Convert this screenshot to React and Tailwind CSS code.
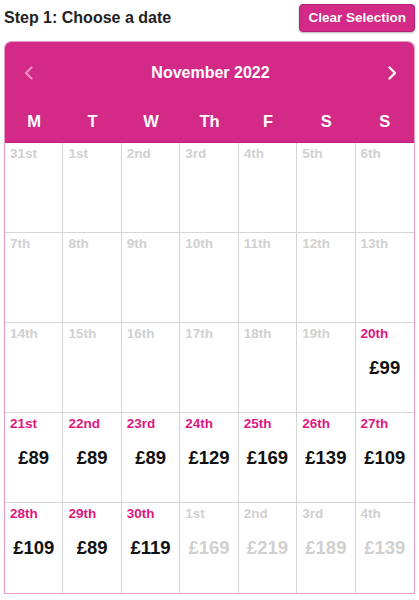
import React from 'react';

const days = ['M', 'T', 'W', 'Th', 'F', 'S', 'S'];

// each cell: label, price, active
const cells = [
  ['31st'], ['1st'], ['2nd'], ['3rd'], ['4th'], ['5th'], ['6th'],
  ['7th'], ['8th'], ['9th'], ['10th'], ['11th'], ['12th'], ['13th'],
  ['14th'], ['15th'], ['16th'], ['17th'], ['18th'], ['19th'], ['20th', '£99', true],
  ['21st', '£89', true], ['22nd', '£89', true], ['23rd', '£89', true], ['24th', '£129', true],
  ['25th', '£169', true], ['26th', '£139', true], ['27th', '£109', true],
  ['28th', '£109', true], ['29th', '£89', true], ['30th', '£119', true],
  ['1st', '£169'], ['2nd', '£219'], ['3rd', '£189'], ['4th', '£139'],
];

const Chevron = ({ dir, className }) => (
  <svg width="14" height="16" viewBox="0 0 14 16" className={className}>
    <path
      d={dir === 'left' ? 'M9.5 2.5 L4 8 L9.5 13.5' : 'M4.5 2.5 L10 8 L4.5 13.5'}
      fill="none"
      stroke="currentColor"
      strokeWidth="2.4"
      strokeLinecap="round"
      strokeLinejoin="round"
    />
  </svg>
);

export default function App() {
  return (
    <div className="w-[419px] h-[600px] bg-white px-[4px] pt-[4px] font-['Liberation_Sans',Arial,sans-serif]">
      {/* cabecera */}
      <div className="flex items-center justify-between h-[28px]">
        <h2 className="text-[16px] font-bold text-[#222]">Step 1: Choose a date</h2>
        <button className="h-[28px] px-[8px] rounded-[4px] bg-[#d42a87] border border-[#b81f72] text-white text-[13.5px] font-bold shadow-[0_1px_2px_rgba(0,0,0,0.3)]">
          Clear Selection
        </button>
      </div>

      {/* calendario */}
      <div className="mt-[9px] w-[411px] rounded-t-[7px] border border-[#e79ac2] overflow-hidden">
        <div className="bg-[#d42a87] border-b border-[#c4217b] h-[101px] flex flex-col">
          <div className="flex items-center justify-between pl-[17px] pr-[15px] pt-[15px] h-[46px]">
            <Chevron dir="left" className="text-[#ee8cc0]" />
            <span className="text-white font-bold text-[16px]">November 2022</span>
            <Chevron dir="right" className="text-white" />
          </div>
          <div className="grid grid-cols-7 mt-[21px]">
            {days.map((d, i) => (
              <div key={i} className="text-center text-white text-[16.5px] font-semibold">{d}</div>
            ))}
          </div>
        </div>
        <div className="grid grid-cols-7">
          {cells.map(([label, price, active], i) => (
            <div
              key={i}
              className={`h-[90px] pl-[5px] pt-[1px] flex flex-col ${i % 7 !== 6 ? 'border-r border-[#d6d6d6]' : ''} ${i < 28 ? 'border-b border-[#d6d6d6]' : ''}`}
            >
              <span className={`text-[13.5px] font-bold ${active ? 'text-[#e0167f]' : 'text-[#d0d0d0]'}`}>{label}</span>
              {price && (
                <span className={`mt-[10px] pr-[5px] text-center text-[18.5px] font-bold ${active ? 'text-[#111]' : 'text-[#d0d0d0]'}`}>
                  {price}
                </span>
              )}
            </div>
          ))}
        </div>
      </div>
    </div>
  );
}
